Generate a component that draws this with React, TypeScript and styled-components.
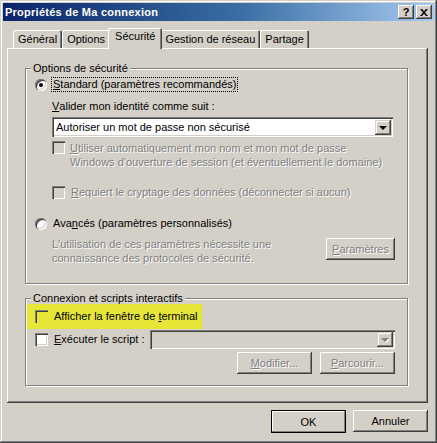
import React from "react";
import styled, { createGlobalStyle } from "styled-components";

// Classic Win2000 palette
const FACE = "#D4D0C8";
const HILITE = "#FFFFFF";
const SHADOW = "#808080";
const DARK = "#404040";
const GRAY_TEXT = "#808080";
const MARKER = "#e6e636";

const Global = createGlobalStyle`
  html, body { margin: 0; padding: 0; background: ${FACE}; }
  body { font-family: Tahoma, "Liberation Sans", Arial, sans-serif; font-size: 11px; color: #000; }
  * { box-sizing: border-box; }
`;

// ── Window chrome ─────────────────────────────────────────────────────────────

const Window = styled.div`
  width: 437px;
  height: 443px;
  background: ${FACE};
  padding: 3px;
  display: flex;
  flex-direction: column;
  box-shadow:
    inset -1px -1px ${DARK},
    inset 1px 1px ${FACE},
    inset -2px -2px ${SHADOW},
    inset 2px 2px ${HILITE};
`;

const TitleBar = styled.div`
  height: 18px;
  display: flex;
  align-items: center;
  padding: 0 2px 0 2px;
  background: linear-gradient(to right, #0a246a, #3a6ea5 55%, #a6caf0);
  color: #fff;
  font-weight: bold;
  font-size: 11px;
  letter-spacing: 0.25px;
`;

const TitleText = styled.div`
  flex: 1;
  white-space: nowrap;
`;

const CaptionBtn = styled.div<{ $gap?: number }>`
  width: 16px;
  height: 14px;
  margin-left: ${(p) => p.$gap ?? 0}px;
  background: ${FACE};
  color: #000;
  display: flex;
  align-items: center;
  justify-content: center;
  font-weight: bold;
  font-size: 11px;
  line-height: 1;
  letter-spacing: 0;
  box-shadow:
    inset -1px -1px ${DARK},
    inset 1px 1px ${HILITE},
    inset -2px -2px ${SHADOW};
`;

// ── Tabs ──────────────────────────────────────────────────────────────────────

const TabRow = styled.div`
  height: 27px;
  display: flex;
  align-items: flex-end;
  padding-left: 10px;
  position: relative;
  z-index: 2;
`;

const Tab = styled.div<{ $active?: boolean }>`
  position: relative;
  height: ${(p) => (p.$active ? 21 : 18)}px;
  margin: ${(p) => (p.$active ? "0 -2px -1px -2px" : "0")};
  padding: ${(p) => (p.$active ? "2px 7px 0 7px" : "3px 5px 0 5px")};
  background: ${FACE};
  border-top-left-radius: 2px;
  border-top-right-radius: 2px;
  white-space: nowrap;
  z-index: ${(p) => (p.$active ? 3 : 1)};
  box-shadow:
    inset 1px 1px ${HILITE},
    inset -1px 0 ${DARK},
    inset -2px 0 ${SHADOW};
`;

const Panel = styled.div`
  height: 355px;
  margin: 0 6px 0 4px;
  padding: 14px 20px 0 18px;
  background: ${FACE};
  display: flex;
  flex-direction: column;
  box-shadow:
    inset -1px -1px ${DARK},
    inset 1px 1px ${HILITE},
    inset -2px -2px ${SHADOW};
`;

// ── Group box ────────────────────────────────────────────────────────────────

const Group = styled.fieldset<{ $h: number; $mt?: number }>`
  margin: ${(p) => p.$mt ?? 0}px 0 0 0;
  padding: 0 12px 0 9px;
  height: ${(p) => p.$h}px;
  min-width: 0;
  border: 1px solid ${SHADOW};
  box-shadow: inset 1px 1px ${HILITE}, 1px 1px ${HILITE};
  display: flex;
  flex-direction: column;
`;

const Legend = styled.legend`
  margin-left: -4px;
  padding: 0 2px;
  background: ${FACE};
  line-height: 13px;
  font-size: 11px;
`;

// ── Controls ──────────────────────────────────────────────────────────────────

const Row = styled.div<{ $mt?: number; $indent?: number }>`
  display: flex;
  align-items: center;
  margin-top: ${(p) => p.$mt ?? 0}px;
  margin-left: ${(p) => p.$indent ?? 0}px;
  line-height: 13px;
  white-space: nowrap;
`;

const RowTop = styled(Row)`
  align-items: flex-start;
`;

const Radio = styled.span<{ $checked?: boolean }>`
  width: 12px;
  height: 12px;
  flex: none;
  border-radius: 50%;
  margin-right: 5px;
  background: #fff;
  position: relative;
  box-shadow:
    inset 1px 1px ${SHADOW},
    inset 2px 2px ${DARK},
    inset -1px -1px ${HILITE},
    inset -2px -2px ${FACE};
  &::after {
    content: "";
    display: ${(p) => (p.$checked ? "block" : "none")};
    position: absolute;
    left: 4px;
    top: 4px;
    width: 4px;
    height: 4px;
    border-radius: 50%;
    background: #000;
  }
`;

const Check = styled.span<{ $disabled?: boolean; $marked?: boolean }>`
  width: 13px;
  height: 13px;
  flex: none;
  margin-right: 5px;
  background: ${(p) => (p.$marked ? MARKER : p.$disabled ? FACE : "#fff")};
  box-shadow:
    inset 1px 1px ${SHADOW},
    inset 2px 2px ${DARK},
    inset -1px -1px ${(p) => (p.$marked ? MARKER : HILITE)},
    inset -2px -2px ${(p) => (p.$marked ? MARKER : FACE)};
`;

const Label = styled.span<{ $disabled?: boolean; $focus?: boolean }>`
  color: ${(p) => (p.$disabled ? GRAY_TEXT : "#000")};
  text-shadow: ${(p) => (p.$disabled ? `1px 1px 0 ${HILITE}` : "none")};
  outline: ${(p) => (p.$focus ? "1px dotted #000" : "none")};
  outline-offset: 0;
  padding: 0 1px;
`;

const Mn = styled.u`
  text-decoration-thickness: 1px;
  text-underline-offset: 1px;
`;

const Para = styled.div<{ $disabled?: boolean; $indent?: number }>`
  line-height: 14px;
  margin-left: ${(p) => p.$indent ?? 0}px;
  color: ${(p) => (p.$disabled ? GRAY_TEXT : "#000")};
  text-shadow: ${(p) => (p.$disabled ? `1px 1px 0 ${HILITE}` : "none")};
  white-space: nowrap;
`;

const Combo = styled.div<{ $disabled?: boolean; $w?: number; $ml?: number }>`
  width: ${(p) => (p.$w ? `${p.$w}px` : "auto")};
  flex: ${(p) => (p.$w ? "none" : 1)};
  height: ${(p) => (p.$disabled ? 19 : 20)}px;
  margin-left: ${(p) => p.$ml ?? 0}px;
  padding: 2px 2px 2px 4px;
  display: flex;
  align-items: center;
  background: ${(p) => (p.$disabled ? FACE : "#fff")};
  box-shadow:
    inset 1px 1px ${SHADOW},
    inset 2px 2px ${DARK},
    inset -1px -1px ${HILITE},
    inset -2px -2px ${FACE};
`;

const ComboText = styled.span`
  flex: 1;
  white-space: nowrap;
  overflow: hidden;
`;

const ComboArrow = styled.span<{ $disabled?: boolean }>`
  width: 16px;
  height: 15px;
  flex: none;
  display: flex;
  align-items: center;
  justify-content: center;
  background: ${FACE};
  box-shadow:
    inset -1px -1px ${DARK},
    inset 1px 1px ${FACE},
    inset -2px -2px ${SHADOW},
    inset 2px 2px ${HILITE};
  &::after {
    content: "";
    border-left: 4px solid transparent;
    border-right: 4px solid transparent;
    border-top: 4px solid ${(p) => (p.$disabled ? GRAY_TEXT : "#000")};
    margin-top: 1px;
    filter: ${(p) => (p.$disabled ? `drop-shadow(1px 1px 0 ${HILITE})` : "none")};
  }
`;

const Button = styled.div<{ $w: number; $disabled?: boolean; $default?: boolean; $mt?: number }>`
  width: ${(p) => p.$w}px;
  height: ${(p) => (p.$default ? 23 : 22)}px;
  flex: none;
  margin-top: ${(p) => p.$mt ?? 0}px;
  display: flex;
  align-items: center;
  justify-content: center;
  background: ${FACE};
  color: ${(p) => (p.$disabled ? GRAY_TEXT : "#000")};
  text-shadow: ${(p) => (p.$disabled ? `1px 1px 0 ${HILITE}` : "none")};
  box-shadow: ${(p) =>
    p.$default
      ? `inset 0 0 0 1px #000, inset -2px -2px ${SHADOW}, inset 2px 2px ${HILITE}`
      : `inset -1px -1px ${DARK}, inset 1px 1px ${HILITE}, inset -2px -2px ${SHADOW}`};
`;

// the yellow marker the screenshot author drew over the first option
const Highlight = styled.div`
  margin: -1px 0 0 -8px;
  padding: 6px 0 6px 8px;
  width: 175px;
  background: ${MARKER};
`;

const Spread = styled.div<{ $mt?: number }>`
  display: flex;
  justify-content: space-between;
  align-items: flex-start;
  margin-top: ${(p) => p.$mt ?? 0}px;
`;

const Right = styled.div<{ $mt?: number; $gap?: number }>`
  display: flex;
  justify-content: flex-end;
  gap: ${(p) => p.$gap ?? 8}px;
  margin-top: ${(p) => p.$mt ?? 0}px;
`;

const Footer = styled.div`
  display: flex;
  justify-content: flex-end;
  gap: 7px;
  margin: 7px 6px 0 0;
`;

export default function App() {
  return (
    <Window>
      <Global />
      <TitleBar>
        <TitleText>Propriétés de Ma connexion</TitleText>
        <CaptionBtn>?</CaptionBtn>
        <CaptionBtn $gap={2}>
          <svg width="8" height="7" viewBox="0 0 8 7">
            <path d="M0 0h2l2 2.3L6 0h2L5 3.5 8 7H6L4 4.7 2 7H0l3-3.5z" fill="#000" />
          </svg>
        </CaptionBtn>
      </TitleBar>

      <TabRow>
        <Tab>Général</Tab>
        <Tab>Options</Tab>
        <Tab $active>Sécurité</Tab>
        <Tab>Gestion de réseau</Tab>
        <Tab>Partage</Tab>
      </TabRow>

      <Panel>
        <Group $h={222}>
          <Legend>Options de sécurité</Legend>
          <Row $mt={3}>
            <Radio $checked />
            <Label $focus>
              <Mn>S</Mn>tandard (paramètres recommandés)
            </Label>
          </Row>
          <Row $mt={9} $indent={17}>
            <Mn>V</Mn>alider mon identité comme suit :
          </Row>
          <Row $mt={4} $indent={17}>
            <Combo $w={341}>
              <ComboText>Autoriser un mot de passe non sécurisé</ComboText>
              <ComboArrow />
            </Combo>
          </Row>
          <RowTop $mt={4} $indent={17}>
            <Check $disabled />
            <Para $disabled>
              <Mn>U</Mn>tiliser automatiquement mon nom et mon mot de passe
              <br />
              Windows d'ouverture de session (et éventuellement le domaine)
            </Para>
          </RowTop>
          <Row $mt={17} $indent={17}>
            <Check $disabled />
            <Label $disabled>
              <Mn>R</Mn>equiert le cryptage des données (déconnecter si aucun)
            </Label>
          </Row>
          <Row $mt={18}>
            <Radio />
            <Label>
              Ava<Mn>n</Mn>cés (paramètres personnalisés)
            </Label>
          </Row>
          <Spread $mt={7}>
            <Para $disabled $indent={17}>
              L'utilisation de ces paramètres nécessite une
              <br />
              connaissance des protocoles de sécurité.
            </Para>
            <Button $w={69} $disabled $mt={1}>
              <Mn>P</Mn>aramètres
            </Button>
          </Spread>
        </Group>

        <Group $h={94} $mt={8}>
          <Legend>Connexion et scripts interactifs</Legend>
          <Highlight>
            <Row>
              <Check $marked />
              <Label>
                Afficher la fenêtre de <Mn>t</Mn>erminal
              </Label>
            </Row>
          </Highlight>
          <Row $mt={1}>
            <Check />
            <Label>
              <Mn>E</Mn>xécuter le script :
            </Label>
            <Combo $disabled $ml={5}>
              <ComboText />
              <ComboArrow $disabled />
            </Combo>
          </Row>
          <Right $mt={3} $gap={8}>
            <Button $w={75} $disabled>
              <Mn>M</Mn>odifier...
            </Button>
            <Button $w={75} $disabled>
              <Mn>P</Mn>arcourir...
            </Button>
          </Right>
        </Group>
      </Panel>

      <Footer>
        <Button $w={75} $default>
          OK
        </Button>
        <Button $w={75}>Annuler</Button>
      </Footer>
    </Window>
  );
}
